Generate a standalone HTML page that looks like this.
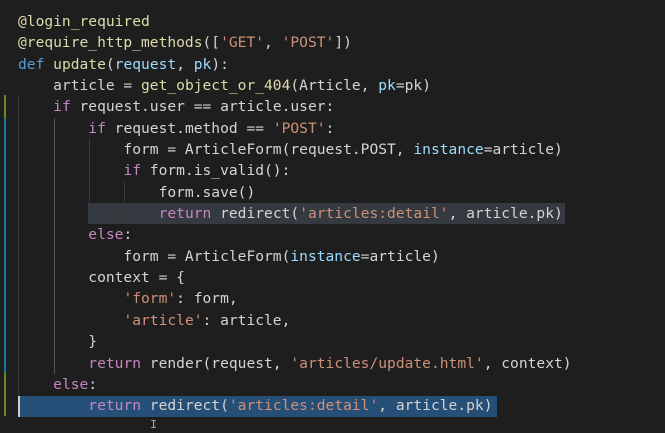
<!DOCTYPE html><html><head><style>
body{margin:0;width:665px;height:433px;background:#1e1e1e;overflow:hidden;position:relative;font-family:"DejaVu Sans Mono",monospace;}
.code{position:absolute;left:18px;top:11px;font-size:14.6px;line-height:21.35px;color:#d4d4d4;white-space:pre;}
.d{color:#dcdcaa}.k{color:#569cd6}.p{color:#9cdcfe}.s{color:#ce9178}.c{color:#c586c0}.f{color:#dcdcaa}.t{color:#4ec9b0}
.hl{position:absolute;left:88px;top:203px;width:477px;height:21px;background:#343a40}
.sel{position:absolute;left:18px;top:396px;width:477px;height:21px;background:#264f78;border-left:2px solid #ccc}
.g{position:absolute;width:1px;background:#3a3a3a}
.bar{position:absolute;left:4px;width:2px}
</style></head><body>
<div class="hl"></div><div class="sel"></div>
<div class="g" style="left:18px;top:96px;height:300px"></div>
<div class="g" style="left:54px;top:118px;height:256px;background:#555"></div>
<div class="g" style="left:89px;top:139px;height:85px"></div>
<div class="g" style="left:124px;top:182px;height:42px"></div>
<div class="bar" style="top:95px;height:23px;background:#6a8a1f"></div>
<div class="bar" style="top:118px;height:255px;background:#1b7a9a"></div>
<div class="bar" style="top:373px;height:43px;background:#6a8a1f"></div>
<div class="code"><span class="d">@login_required</span>
<span class="d">@require_http_methods</span>([<span class="s">'GET'</span>, <span class="s">'POST'</span>])
<span class="k">def</span> <span class="f">update</span>(<span class="p">request</span>, <span class="p">pk</span>):
    article = <span class="f">get_object_or_404</span>(Article, <span class="p">pk</span>=pk)
    <span class="c">if</span> request.user == article.user:
        <span class="c">if</span> request.method == <span class="s">'POST'</span>:
            form = ArticleForm(request.POST, <span class="p">instance</span>=article)
            <span class="c">if</span> form.is_valid():
                form.save()
                <span class="c">return</span> redirect(<span class="s">'articles:detail'</span>, article.pk)
        <span class="c">else</span>:
            form = ArticleForm(<span class="p">instance</span>=article)
        context = {
            <span class="s">'form'</span>: form,
            <span class="s">'article'</span>: article,
        }
        <span class="c">return</span> render(request, <span class="s">'articles/update.html'</span>, context)
    <span class="c">else</span>:
        <span class="c">return</span> redirect(<span class="s">'articles:detail'</span>, article.pk)</div>
<div style="position:absolute;left:150px;top:418px;color:#aaa;font-size:12px;font-family:'Liberation Mono',monospace">I</div>
</body></html>
